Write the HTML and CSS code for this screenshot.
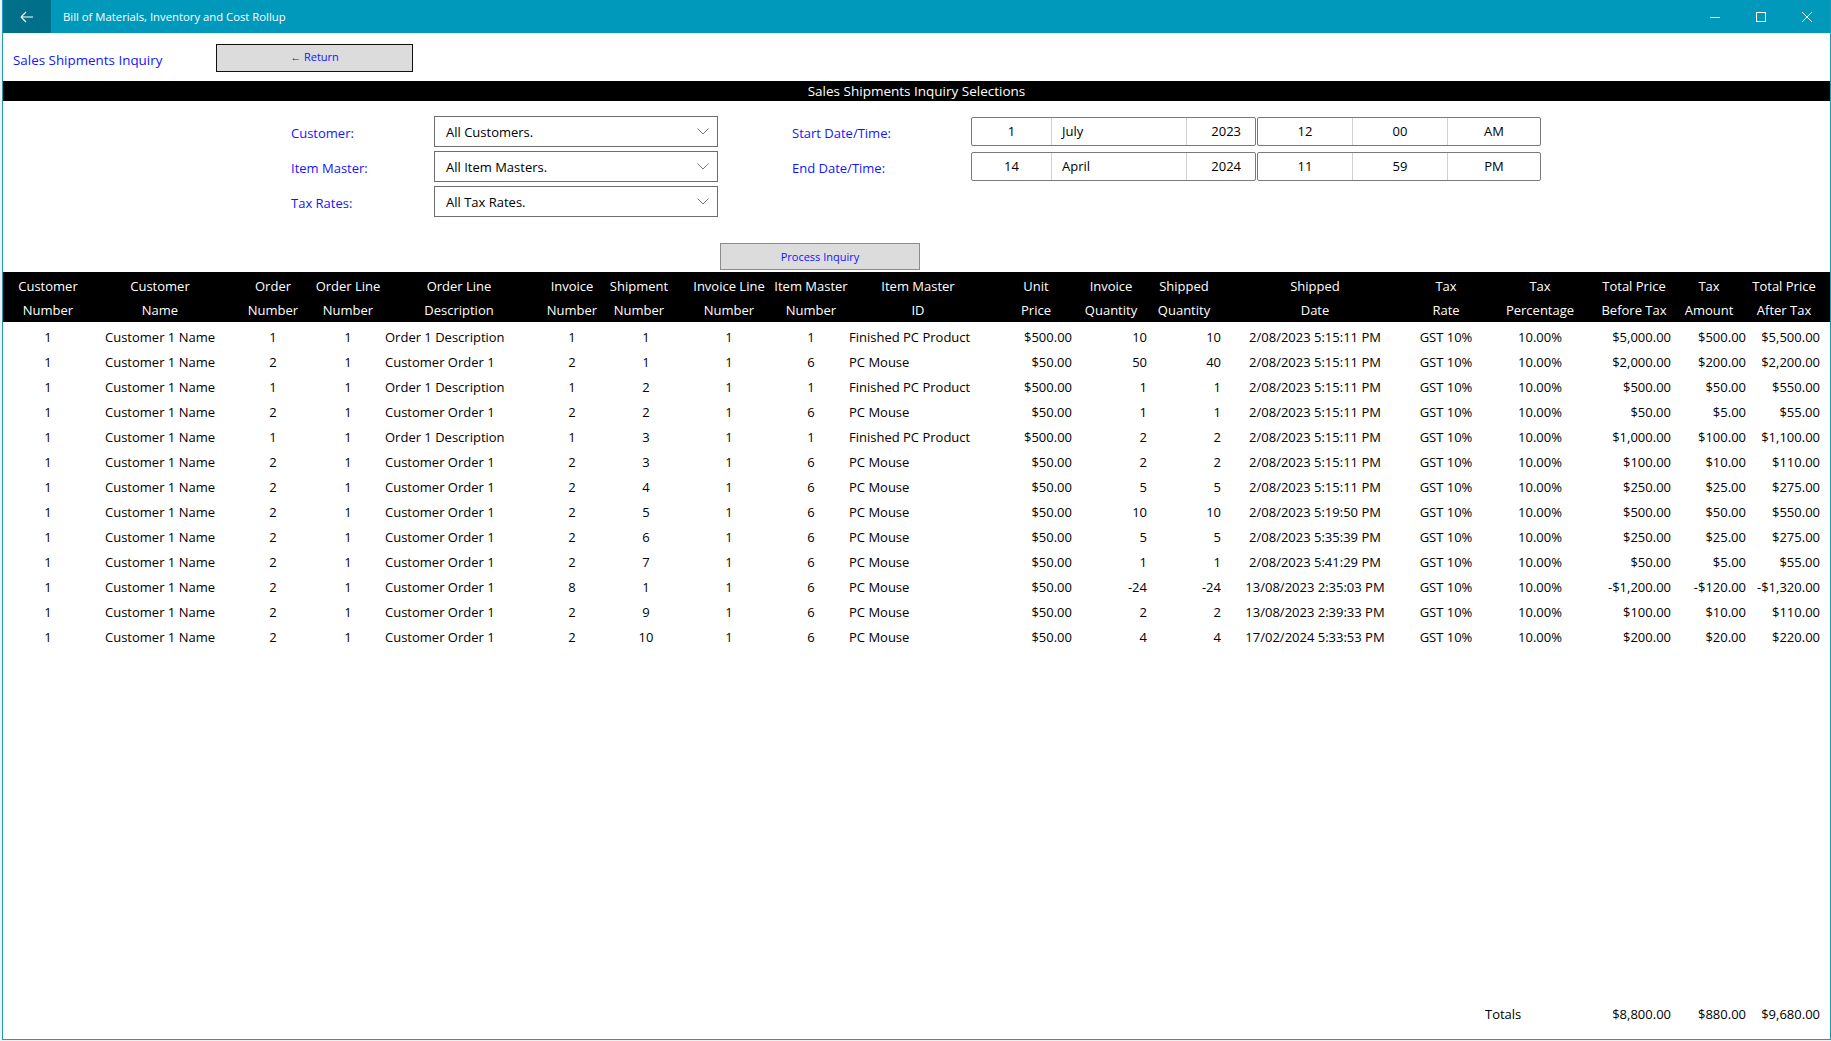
FILE: index.html
```html
<!DOCTYPE html>
<html lang="en">
<head>
<meta charset="utf-8">
<title>Bill of Materials, Inventory and Cost Rollup</title>
<link rel="stylesheet" href="styles.css">
</head>
<body>
<div class="window">
  <header class="titlebar">
    <div class="back">
      <svg width="14" height="12" viewBox="0 0 14 12"><path d="M1 6H13M1 6L6 1M1 6L6 11" stroke="#fff" stroke-width="1.2" fill="none"/></svg>
    </div>
    <div class="title">Bill of Materials, Inventory and Cost Rollup</div>
    <div class="controls">
      <div class="ctl"><svg width="10" height="10" viewBox="0 0 10 10"><path d="M0 5.5H10" stroke="#fff" stroke-width="1"/></svg></div>
      <div class="ctl"><svg width="10" height="10" viewBox="0 0 10 10"><rect x="0.5" y="0.5" width="9" height="9" stroke="#fff" fill="none"/></svg></div>
      <div class="ctl"><svg width="10" height="10" viewBox="0 0 10 10"><path d="M0 0L10 10M10 0L0 10" stroke="#fff" stroke-width="1"/></svg></div>
    </div>
  </header>

  <div class="topbar">
    <div class="page-title">Sales Shipments Inquiry</div>
    <button class="btn return-btn">&#8592; Return</button>
  </div>

  <div class="section-bar">Sales Shipments Inquiry Selections</div>

  <div class="selections">
    <div class="sel-left">
      <div class="label">Customer:</div>
      <div class="combo"><span>All Customers.</span><svg width="12" height="7" viewBox="0 0 12 7"><path d="M0.5 0.5L6 6L11.5 0.5" stroke="#7a7a7a" fill="none"/></svg></div>
      <div class="label">Item Master:</div>
      <div class="combo"><span>All Item Masters.</span><svg width="12" height="7" viewBox="0 0 12 7"><path d="M0.5 0.5L6 6L11.5 0.5" stroke="#7a7a7a" fill="none"/></svg></div>
      <div class="label">Tax Rates:</div>
      <div class="combo"><span>All Tax Rates.</span><svg width="12" height="7" viewBox="0 0 12 7"><path d="M0.5 0.5L6 6L11.5 0.5" stroke="#7a7a7a" fill="none"/></svg></div>
    </div>
    <div class="sel-right">
      <div class="label">Start Date/Time:</div>
      <div class="picker datebox"><span class="p-day">1</span><span class="p-month">July</span><span class="p-year">2023</span></div>
      <div class="picker timebox"><span class="p-t">12</span><span class="p-t">00</span><span class="p-t">AM</span></div>
      <div class="label">End Date/Time:</div>
      <div class="picker datebox"><span class="p-day">14</span><span class="p-month">April</span><span class="p-year">2024</span></div>
      <div class="picker timebox"><span class="p-t">11</span><span class="p-t">59</span><span class="p-t">PM</span></div>
    </div>
  </div>

  <div class="process-row">
    <button class="btn process-btn">Process Inquiry</button>
  </div>

  <div class="row thead">
    <div class="th"><span>Customer</span><span>Number</span></div>
    <div class="th"><span>Customer</span><span>Name</span></div>
    <div class="th"><span>Order</span><span>Number</span></div>
    <div class="th"><span>Order Line</span><span>Number</span></div>
    <div class="th"><span>Order Line</span><span>Description</span></div>
    <div class="th"><span>Invoice</span><span>Number</span></div>
    <div class="th"><span>Shipment</span><span>Number</span></div>
    <div class="th"><span>Invoice Line</span><span>Number</span></div>
    <div class="th"><span>Item Master</span><span>Number</span></div>
    <div class="th"><span>Item Master</span><span>ID</span></div>
    <div class="th"><span>Unit</span><span>Price</span></div>
    <div class="th"><span>Invoice</span><span>Quantity</span></div>
    <div class="th"><span>Shipped</span><span>Quantity</span></div>
    <div class="th"><span>Shipped</span><span>Date</span></div>
    <div class="th"><span>Tax</span><span>Rate</span></div>
    <div class="th"><span>Tax</span><span>Percentage</span></div>
    <div class="th"><span>Total Price</span><span>Before Tax</span></div>
    <div class="th"><span>Tax</span><span>Amount</span></div>
    <div class="th"><span>Total Price</span><span>After Tax</span></div>
  </div>

  <div class="tbody">
    <div class="row"><span>1</span><span>Customer 1 Name</span><span>1</span><span>1</span><span>Order 1 Description</span><span>1</span><span>1</span><span>1</span><span>1</span><span>Finished PC Product</span><span>$500.00</span><span>10</span><span>10</span><span>2/08/2023 5:15:11 PM</span><span>GST 10%</span><span>10.00%</span><span>$5,000.00</span><span>$500.00</span><span>$5,500.00</span></div>
    <div class="row"><span>1</span><span>Customer 1 Name</span><span>2</span><span>1</span><span>Customer Order 1</span><span>2</span><span>1</span><span>1</span><span>6</span><span>PC Mouse</span><span>$50.00</span><span>50</span><span>40</span><span>2/08/2023 5:15:11 PM</span><span>GST 10%</span><span>10.00%</span><span>$2,000.00</span><span>$200.00</span><span>$2,200.00</span></div>
    <div class="row"><span>1</span><span>Customer 1 Name</span><span>1</span><span>1</span><span>Order 1 Description</span><span>1</span><span>2</span><span>1</span><span>1</span><span>Finished PC Product</span><span>$500.00</span><span>1</span><span>1</span><span>2/08/2023 5:15:11 PM</span><span>GST 10%</span><span>10.00%</span><span>$500.00</span><span>$50.00</span><span>$550.00</span></div>
    <div class="row"><span>1</span><span>Customer 1 Name</span><span>2</span><span>1</span><span>Customer Order 1</span><span>2</span><span>2</span><span>1</span><span>6</span><span>PC Mouse</span><span>$50.00</span><span>1</span><span>1</span><span>2/08/2023 5:15:11 PM</span><span>GST 10%</span><span>10.00%</span><span>$50.00</span><span>$5.00</span><span>$55.00</span></div>
    <div class="row"><span>1</span><span>Customer 1 Name</span><span>1</span><span>1</span><span>Order 1 Description</span><span>1</span><span>3</span><span>1</span><span>1</span><span>Finished PC Product</span><span>$500.00</span><span>2</span><span>2</span><span>2/08/2023 5:15:11 PM</span><span>GST 10%</span><span>10.00%</span><span>$1,000.00</span><span>$100.00</span><span>$1,100.00</span></div>
    <div class="row"><span>1</span><span>Customer 1 Name</span><span>2</span><span>1</span><span>Customer Order 1</span><span>2</span><span>3</span><span>1</span><span>6</span><span>PC Mouse</span><span>$50.00</span><span>2</span><span>2</span><span>2/08/2023 5:15:11 PM</span><span>GST 10%</span><span>10.00%</span><span>$100.00</span><span>$10.00</span><span>$110.00</span></div>
    <div class="row"><span>1</span><span>Customer 1 Name</span><span>2</span><span>1</span><span>Customer Order 1</span><span>2</span><span>4</span><span>1</span><span>6</span><span>PC Mouse</span><span>$50.00</span><span>5</span><span>5</span><span>2/08/2023 5:15:11 PM</span><span>GST 10%</span><span>10.00%</span><span>$250.00</span><span>$25.00</span><span>$275.00</span></div>
    <div class="row"><span>1</span><span>Customer 1 Name</span><span>2</span><span>1</span><span>Customer Order 1</span><span>2</span><span>5</span><span>1</span><span>6</span><span>PC Mouse</span><span>$50.00</span><span>10</span><span>10</span><span>2/08/2023 5:19:50 PM</span><span>GST 10%</span><span>10.00%</span><span>$500.00</span><span>$50.00</span><span>$550.00</span></div>
    <div class="row"><span>1</span><span>Customer 1 Name</span><span>2</span><span>1</span><span>Customer Order 1</span><span>2</span><span>6</span><span>1</span><span>6</span><span>PC Mouse</span><span>$50.00</span><span>5</span><span>5</span><span>2/08/2023 5:35:39 PM</span><span>GST 10%</span><span>10.00%</span><span>$250.00</span><span>$25.00</span><span>$275.00</span></div>
    <div class="row"><span>1</span><span>Customer 1 Name</span><span>2</span><span>1</span><span>Customer Order 1</span><span>2</span><span>7</span><span>1</span><span>6</span><span>PC Mouse</span><span>$50.00</span><span>1</span><span>1</span><span>2/08/2023 5:41:29 PM</span><span>GST 10%</span><span>10.00%</span><span>$50.00</span><span>$5.00</span><span>$55.00</span></div>
    <div class="row"><span>1</span><span>Customer 1 Name</span><span>2</span><span>1</span><span>Customer Order 1</span><span>8</span><span>1</span><span>1</span><span>6</span><span>PC Mouse</span><span>$50.00</span><span>-24</span><span>-24</span><span>13/08/2023 2:35:03 PM</span><span>GST 10%</span><span>10.00%</span><span>-$1,200.00</span><span>-$120.00</span><span>-$1,320.00</span></div>
    <div class="row"><span>1</span><span>Customer 1 Name</span><span>2</span><span>1</span><span>Customer Order 1</span><span>2</span><span>9</span><span>1</span><span>6</span><span>PC Mouse</span><span>$50.00</span><span>2</span><span>2</span><span>13/08/2023 2:39:33 PM</span><span>GST 10%</span><span>10.00%</span><span>$100.00</span><span>$10.00</span><span>$110.00</span></div>
    <div class="row"><span>1</span><span>Customer 1 Name</span><span>2</span><span>1</span><span>Customer Order 1</span><span>2</span><span>10</span><span>1</span><span>6</span><span>PC Mouse</span><span>$50.00</span><span>4</span><span>4</span><span>17/02/2024 5:33:53 PM</span><span>GST 10%</span><span>10.00%</span><span>$200.00</span><span>$20.00</span><span>$220.00</span></div>
  </div>

  <div class="row totals">
    <span class="totals-label">Totals</span>
    <span class="totals-before">$8,800.00</span>
    <span class="totals-tax">$880.00</span>
    <span class="totals-after">$9,680.00</span>
  </div>
</div>
</body>
</html>
```

FILE: styles.css
```css
html, body {
  margin: 0;
  padding: 0;
}

body {
  background: #f0f0f0;
  font-family: "Open Sans", "Noto Sans", sans-serif;
  color: #000;
}

.window {
  margin-left: 2px;
  width: 1829px;
  height: 1040px;
  box-sizing: border-box;
  border-left: 1px solid #1b9ac0;
  border-right: 1px solid #1b9ac0;
  border-bottom: 1px solid #1b9ac0;
  background: #fff;
  display: flex;
  flex-direction: column;
}

/* ---------- title bar ---------- */
.titlebar {
  height: 33px;
  flex-shrink: 0;
  background: #0099bc;
  color: #fff;
  display: flex;
  align-items: center;
}

.back {
  width: 48px;
  height: 33px;
  background: #00708a;
  display: flex;
  align-items: center;
  justify-content: center;
}

.title {
  flex: 1;
  padding-left: 12px;
  font-size: 11.3px;
  line-height: 33px;
  white-space: nowrap;
}

.controls {
  display: flex;
}

.ctl {
  width: 46px;
  height: 33px;
  display: flex;
  align-items: center;
  justify-content: center;
}

/* ---------- page header ---------- */
.topbar {
  height: 48px;
  flex-shrink: 0;
  box-sizing: border-box;
  padding: 11px 0 0 10px;
  display: flex;
  align-items: flex-start;
}

.page-title {
  width: 203px;
  margin-top: 6px;
  font-size: 13.4px;
  line-height: 20px;
  color: #1414ff;
  white-space: nowrap;
}

.btn {
  font-family: "Open Sans", "Noto Sans", sans-serif;
  font-size: 11px;
  color: #1414ff;
  background: #dcdcdc;
  box-sizing: border-box;
  margin: 0;
  padding: 0;
  cursor: pointer;
}

.return-btn {
  width: 197px;
  height: 28px;
  border: 1px solid #111;
  line-height: 24px;
  padding-bottom: 3px;
}

.section-bar {
  height: 20px;
  flex-shrink: 0;
  background: #000;
  color: #fff;
  text-align: center;
  font-size: 13.5px;
  line-height: 20px;
}

/* ---------- selections ---------- */
.selections {
  display: flex;
  padding: 15px 0 0 288px;
  flex-shrink: 0;
}

.sel-left {
  display: grid;
  grid-template-columns: 143px 284px;
  grid-auto-rows: 31px;
  row-gap: 4px;
  align-items: center;
}

.sel-right {
  margin-left: 74px;
  display: grid;
  grid-template-columns: 179px 285px 285px;
  grid-auto-rows: 31px;
  row-gap: 4px;
  align-items: center;
}

.label {
  color: #1414ff;
  font-size: 13px;
  line-height: 20px;
  padding-top: 3px;
  white-space: nowrap;
}

.combo {
  height: 31px;
  box-sizing: border-box;
  border: 1px solid #6e6e6e;
  padding: 0 8px 0 11px;
  display: flex;
  align-items: center;
  justify-content: space-between;
  font-size: 13px;
  white-space: nowrap;
}

.picker {
  height: 29px;
  box-sizing: border-box;
  border: 1px solid #7a7a7a;
  border-radius: 2px;
  display: flex;
  font-size: 13px;
  line-height: 27px;
  white-space: nowrap;
}

.timebox {
  margin-left: 1px;
}

.picker > span {
  box-sizing: border-box;
}

.picker > span + span {
  border-left: 1px solid #d0d0d0;
}

.p-day {
  width: 79px;
  text-align: center;
}

.p-month {
  width: 135px;
  padding-left: 10px;
}

.p-year {
  flex: 1;
  text-align: right;
  padding-right: 14px;
}

.p-t {
  width: 95px;
  text-align: center;
}

.p-t:first-child {
  width: 94px;
}

.p-t:last-child {
  flex: 1;
}

/* ---------- process ---------- */
.process-row {
  flex-shrink: 0;
  margin-top: 26px;
  padding-left: 717px;
  height: 27px;
}

.process-btn {
  width: 200px;
  height: 27px;
  border: 1px solid #8c8c8c;
  line-height: 25px;
}

/* ---------- data grid ---------- */
.row {
  display: grid;
  grid-template-columns: 90px 134px 92px 58px 164px 62px 72px 108px 56px 158px 78px 72px 74px 188px 74px 114px 74px 76px 74px 1fr;
  font-size: 13px;
}

.row > span {
  display: flex;
  justify-content: center;
  white-space: nowrap;
  height: 25px;
  line-height: 25px;
  box-sizing: border-box;
}

.thead {
  flex-shrink: 0;
  margin-top: 2px;
  height: 50px;
  background: #000;
  color: #fff;
}

.th {
  display: flex;
  flex-direction: column;
  align-items: center;
  padding-top: 2px;
  white-space: nowrap;
}

.th > span {
  line-height: 24px;
  height: 24px;
}

.tbody {
  flex: 1;
  padding-top: 3px;
}

.tbody .row > :nth-child(5) {
  justify-content: flex-start;
  padding-left: 8px;
}

.tbody .row > :nth-child(7) {
  padding-left: 14px;
}

.tbody .row > :nth-child(10) {
  justify-content: flex-start;
  padding-left: 10px;
}

.tbody .row > :nth-child(11) {
  justify-content: flex-end;
  padding-right: 3px;
}

.tbody .row > :nth-child(12),
.tbody .row > :nth-child(13),
.tbody .row > :nth-child(17) {
  justify-content: flex-end;
}

.tbody .row > :nth-child(18),
.tbody .row > :nth-child(19) {
  justify-content: flex-end;
  padding-right: 1px;
}

/* ---------- totals ---------- */
.totals {
  flex-shrink: 0;
  margin-bottom: 12px;
}

.totals .totals-label {
  grid-column: 16;
  justify-content: flex-start;
  padding-left: 2px;
}

.totals .totals-before {
  grid-column: 17;
  justify-content: flex-end;
}

.totals .totals-tax {
  grid-column: 18;
  justify-content: flex-end;
  padding-right: 1px;
}

.totals .totals-after {
  grid-column: 19;
  justify-content: flex-end;
  padding-right: 1px;
}
```
